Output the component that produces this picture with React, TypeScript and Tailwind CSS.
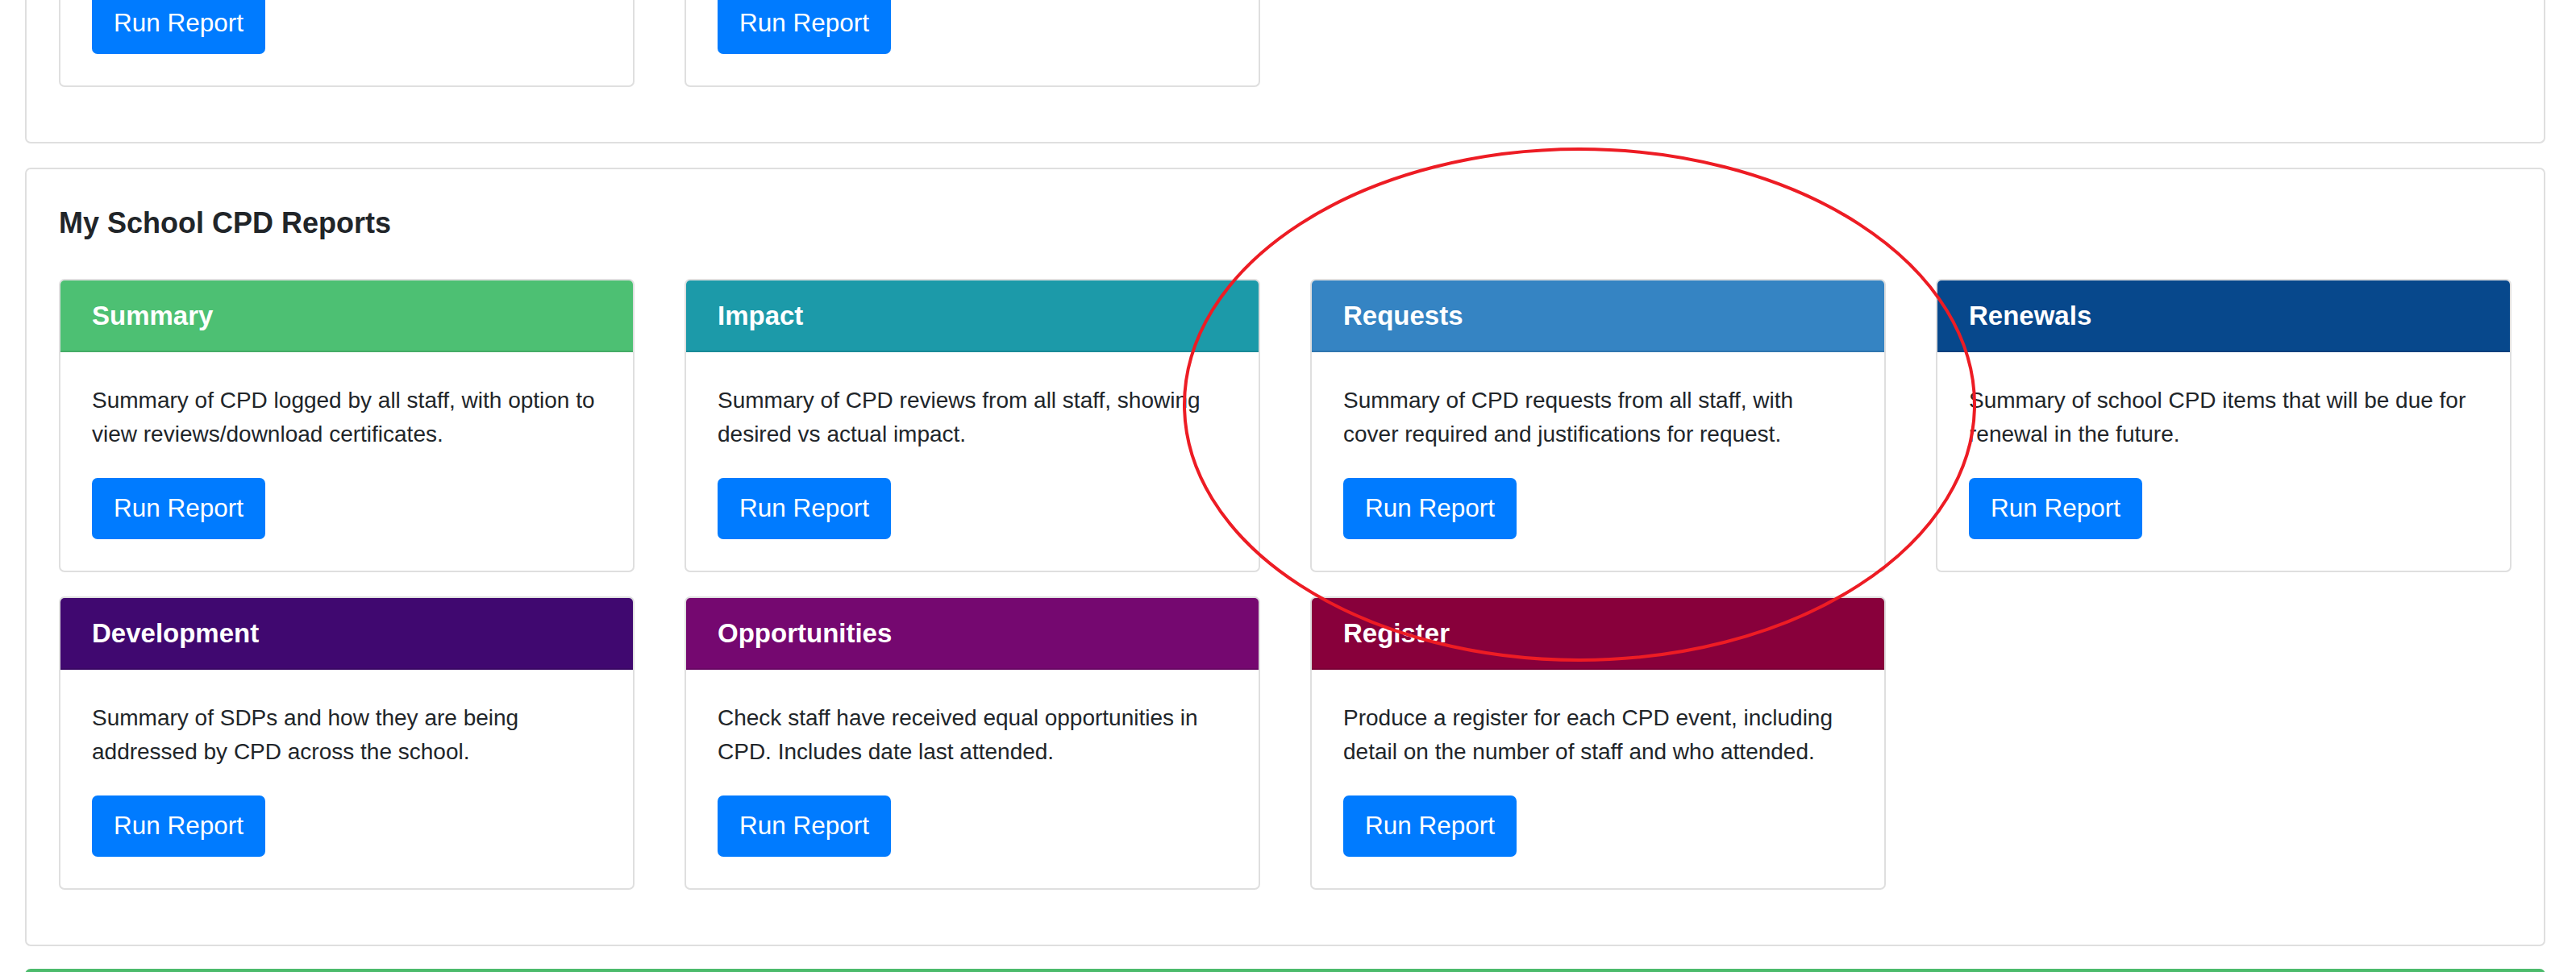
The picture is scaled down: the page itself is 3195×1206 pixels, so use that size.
import { Fragment } from "react";
import { clsx } from "clsx";

type Report = { title: string; header: string; lines: [string, string] };

const SCHOOL_REPORTS: Report[] = [
  {
    title: "Summary",
    header: "bg-[#4dc073]",
    lines: ["Summary of CPD logged by all staff, with option to", "view reviews/download certificates."],
  },
  {
    title: "Impact",
    header: "bg-[#1c9aa9]",
    lines: ["Summary of CPD reviews from all staff, showing", "desired vs actual impact."],
  },
  {
    title: "Requests",
    header: "bg-[#3584c3]",
    lines: ["Summary of CPD requests from all staff, with", "cover required and justifications for request."],
  },
  {
    title: "Renewals",
    header: "bg-[#07488c]",
    lines: ["Summary of school CPD items that will be due for", "renewal in the future."],
  },
  {
    title: "Development",
    header: "bg-[#400870]",
    lines: ["Summary of SDPs and how they are being", "addressed by CPD across the school."],
  },
  {
    title: "Opportunities",
    header: "bg-[#750870]",
    lines: ["Check staff have received equal opportunities in", "CPD. Includes date last attended."],
  },
  {
    title: "Register",
    header: "bg-[#88003b]",
    lines: ["Produce a register for each CPD event, including", "detail on the number of staff and who attended."],
  },
];

function RunReport() {
  return (
    <button className="flex h-[76px] w-fit items-center rounded-[7px] bg-[#007bff] px-[27px] text-[31.5px] leading-none text-white">
      Run Report
    </button>
  );
}

function ReportCard({ title, header, lines }: Report) {
  return (
    <div className="flex flex-col overflow-hidden rounded-[7px] border-2 border-[#dfdfdf] bg-white">
      <div className={clsx("flex h-[89px] items-center border-b-2 border-black/10 px-[39px]", header)}>
        <h5 className="text-[33px] font-bold leading-[1.2] text-white">{title}</h5>
      </div>
      <div className="px-[39px] pt-[39px] pb-[39px]">
        <p className="whitespace-nowrap text-[28px] leading-[42px] text-[#212529]">
          {lines.map((l, i) => (
            <Fragment key={i}>
              {i > 0 && <br />}
              {l}
            </Fragment>
          ))}
        </p>
        <div className="mt-[33px]">
          <RunReport />
        </div>
      </div>
    </div>
  );
}

export default function App() {
  return (
    <div className="relative flex min-h-screen flex-col bg-white font-['Liberation_Sans',Arial,sans-serif] text-[#212529]">
      {/* previous section, scrolled mostly out of view */}
      <section className="-mt-[9px] ml-[31px] w-[3126px] rounded-b-[7px] border-x-2 border-b-2 border-[#dfdfdf] px-[40px] pb-[68px]">
        <div className="grid grid-cols-4 gap-x-[62px]">
          {[0, 1].map((i) => (
            <div key={i} className="rounded-b-[7px] border-x-2 border-b-2 border-[#dfdfdf] px-[39px] pb-[39px]">
              <RunReport />
            </div>
          ))}
        </div>
      </section>

      <section className="mt-[30px] ml-[31px] w-[3126px] rounded-[7px] border-2 border-[#dfdfdf] px-[40px] pt-[45px] pb-[68px]">
        <h5 className="mb-[48px] text-[36px] font-bold leading-[43px] text-[#212529]">My School CPD Reports</h5>
        <div className="grid grid-cols-4 gap-x-[62px] gap-y-[30px]">
          {SCHOOL_REPORTS.map((r) => (
            <ReportCard key={r.title} {...r} />
          ))}
        </div>
      </section>

      {/* next section edge */}
      <section className="mt-[28px] ml-[31px] h-[80px] w-[3126px] rounded-t-[7px] border-t-4 border-[#4cbb6c]" />

      {/* red annotation ring */}
      <svg
        className="pointer-events-none absolute left-[1467px] top-[183px] h-[638px] w-[984px]"
        viewBox="0 0 984 638"
        fill="none"
      >
        <ellipse cx="492" cy="319" rx="490" ry="317" stroke="#ed1c24" strokeWidth="4" />
      </svg>
    </div>
  );
}
